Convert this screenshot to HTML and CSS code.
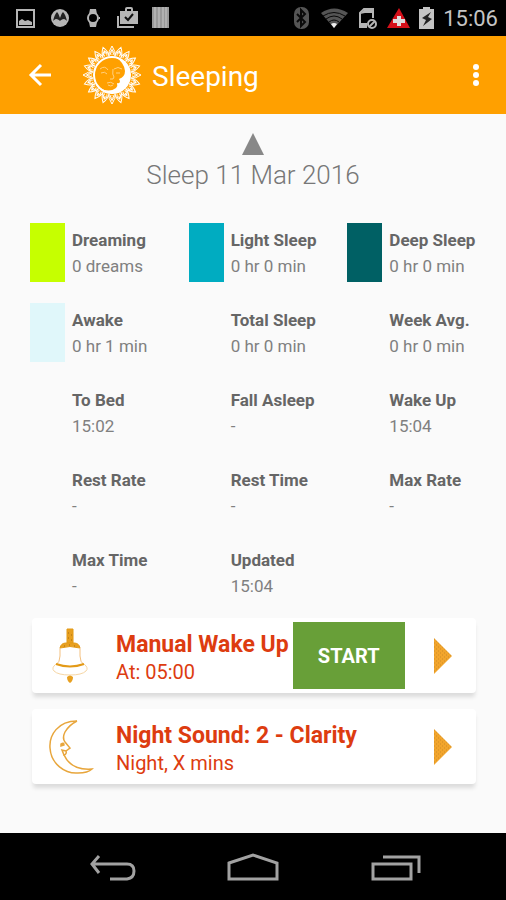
FILE: index.html
```html
<!DOCTYPE html>
<html lang="en">
  <head>
    <meta charset="UTF-8" />
    <meta name="viewport" content="width=device-width, initial-scale=1.0" />
    <title>Sleeping</title>
    <link rel="stylesheet" href="styles.css">
  </head>
  <body>
    <div class="status-bar">
      <div class="status-left">
        <svg width="24" height="24" viewBox="0 0 24 24" fill="none" stroke="#b5b5b5">
          <rect x="3" y="4" width="17" height="17" stroke-width="2" />
          <path d="M5 19v-4l3-2 3 2 3-1 4 2v3z" fill="#b5b5b5" stroke="none" />
        </svg>
        <svg width="24" height="24" viewBox="0 0 24 24">
          <circle cx="12" cy="12" r="9" fill="#b5b5b5" />
          <path d="M5 15c1-4 2-7 4-9 2 2 2 4 3 6 1-2 1-4 3-6 2 2 3 5 4 9-1-1-2-2-3-2-2 0-3 1-4 2-1-1-2-2-4-2-1 0-2 1-3 2z" fill="#222" />
        </svg>
        <svg width="24" height="24" viewBox="0 0 24 24" fill="#b5b5b5">
          <path d="M8 3h6l1 5H7zM7 16h8l-1 5H8z" />
          <circle cx="11" cy="12" r="5" fill="#000" stroke="#b5b5b5" stroke-width="2" />
          <path d="M17 11h1v2h-1z" />
        </svg>
        <svg width="24" height="24" viewBox="0 0 24 24" fill="#b5b5b5">
          <path d="M1 10h2v10h15v2H1z" />
          <path d="M4 5h5V3q0-2 2-2h4q2 0 2 2v2h5v13H4zM11 3v2h4V3z" fill-rule="evenodd" />
          <path d="M9 11l3 3 5-6" fill="none" stroke="#111" stroke-width="2" />
        </svg>
        <svg width="24" height="24" viewBox="0 0 24 24">
          <path d="M2 1h17v21H2z" fill="#999" />
          <path d="M5 1v21M9 1v21M13 1v21M16 1v21" stroke="#c8c8c8" />
        </svg>
      </div>
      <div class="status-right">
        <svg width="18" height="24" viewBox="0 0 18 24">
          <rect x="0" y="1" width="15" height="22" rx="7" fill="#555" />
          <path d="M3 8l8 8-4 4V4l4 4-8 8" fill="none" stroke="#0a0a0a" stroke-width="2" />
        </svg>
        <svg width="30" height="24" viewBox="0 0 30 24">
          <path d="M1 7Q14-2 28 7L14 22z" fill="#555" />
          <path d="M3 10q11-7 22 0M6 13q8-6 16 0M9 16q5-4 10 0" fill="none" stroke="#080808" />
          <path d="M11 18q3-2 6 0l-3 4z" fill="#eee" />
        </svg>
        <svg width="20" height="24" viewBox="0 0 20 24" fill="none" stroke="#b5b5b5" stroke-width="2">
          <path d="M8 21H2V7l4-4h9v9" />
          <path d="M1 17h8v5H1zM2 8l5-5h8v4H7z" fill="#b5b5b5" stroke="none" />
          <circle cx="14" cy="18" r="4" />
          <path d="M11 21l6-6" />
        </svg>
        <svg width="24" height="24" viewBox="0 0 24 24">
          <path d="M13 2l11 20H1z" fill="#d4101a" />
          <path d="M11 10h4v3h4v4h-4v3h-4v-3H7v-4h4z" fill="#ddd" />
        </svg>
        <svg width="17" height="24" viewBox="0 0 17 24">
          <path d="M5 1h7v2h4v20H1V3h4z" fill="#c4c4c4" />
          <path d="M13 6l-9 6 4 2-3 6 9-7-4-2z" fill="#222" />
        </svg>
        <span class="clock">15:06</span>
      </div>
    </div>

    <header class="app-bar">
      <button class="icon-btn" type="button" aria-label="Back">
        <svg width="24" height="24" viewBox="0 0 24 24" fill="none" stroke="#fff" stroke-width="3">
          <path d="M13 2L3 12l10 10M3 12h20" />
        </svg>
      </button>
      <svg class="logo" width="60" height="60" viewBox="-30 -30 60 60">
        <defs>
          <g id="ray" fill="none" stroke="#fff">
            <path d="M-3-19Q-4-23 0-29 4-23 3-19M0-26v4M-1-20Q-3-23 0-25 3-23 1-20" />
          </g>
          <g id="rays">
            <use href="#ray" />
            <use href="#ray" transform="rotate(18)" />
            <use href="#ray" transform="rotate(36)" />
            <use href="#ray" transform="rotate(54)" />
            <use href="#ray" transform="rotate(72)" />
          </g>
        </defs>
        <use href="#rays" />
        <use href="#rays" transform="rotate(90)" />
        <use href="#rays" transform="rotate(180)" />
        <use href="#rays" transform="rotate(270)" />
        <circle r="18" fill="#ffa000" stroke="#fff" stroke-width="2" />
        <path d="M3-18A18 18 0 1 1-12 13Q-3 18 4 13 6 11 5 8 8 9 8 6L7 4Q13 2 13-4 12-13 3-18z" fill="#fff" />
        <path d="M-12-6q5-4 8 1M-11-2q4-2 6 1M1-6q-1 6 1 8 0 3-4 2M2-6q4-3 8 0M4-2h4M-5 8q4-2 7 1M-4 10q3 2 5 0" fill="none" stroke="#ffd080" />
      </svg>
      <h1>Sleeping</h1>
      <button class="icon-btn menu" type="button" aria-label="More options">
        <svg width="8" height="24" viewBox="0 0 8 24" fill="#fff">
          <circle cx="4" cy="4" r="3" />
          <circle cx="4" cy="12" r="3" />
          <circle cx="4" cy="20" r="3" />
        </svg>
      </button>
    </header>

    <main>
      <div class="date">
        <button class="icon-btn" type="button" aria-label="Show chart">
          <svg width="22" height="22" viewBox="0 0 22 22" fill="#888">
            <path d="M11 0l11 22H0z" />
          </svg>
        </button>
        <h2>Sleep 11 Mar 2016</h2>
      </div>

      <dl class="stats">
        <div class="stat dreaming"><dt>Dreaming</dt><dd>0 dreams</dd></div>
        <div class="stat light"><dt>Light Sleep</dt><dd>0 hr 0 min</dd></div>
        <div class="stat deep"><dt>Deep Sleep</dt><dd>0 hr 0 min</dd></div>
        <div class="stat awake"><dt>Awake</dt><dd>0 hr 1 min</dd></div>
        <div class="stat"><dt>Total Sleep</dt><dd>0 hr 0 min</dd></div>
        <div class="stat"><dt>Week Avg.</dt><dd>0 hr 0 min</dd></div>
        <div class="stat"><dt>To Bed</dt><dd>15:02</dd></div>
        <div class="stat"><dt>Fall Asleep</dt><dd>-</dd></div>
        <div class="stat"><dt>Wake Up</dt><dd>15:04</dd></div>
        <div class="stat"><dt>Rest Rate</dt><dd>-</dd></div>
        <div class="stat"><dt>Rest Time</dt><dd>-</dd></div>
        <div class="stat"><dt>Max Rate</dt><dd>-</dd></div>
        <div class="stat"><dt>Max Time</dt><dd>-</dd></div>
        <div class="stat"><dt>Updated</dt><dd>15:04</dd></div>
      </dl>

      <section class="card">
        <svg class="card-icon" width="60" height="60" viewBox="0 0 60 60" fill="none" stroke="#f3c080">
          <path d="M26 3h6v14h-6z" fill="#e8a020" stroke="#e39a17" />
          <path d="M19 22q1-5 6-5h8q5 0 6 5-10-3-20 0z" fill="#e8a020" stroke="#e39a17" />
          <path d="M27 7h1M30 9h1M27 12h1M30 14h1M23 20h1M28 19h1M33 20h1" stroke="#a66d12" />
          <path d="M19 22v8q0 6-4 9M39 22v8q0 6 4 9" />
          <path d="M15 38q14 5 28 0" stroke="#e39a17" stroke-width="2" />
          <path d="M15 38q-5 4-2 7 4 4 16 4t16-4q3-3-2-7" stroke="#f6d6a4" />
          <path d="M26 51q3-3 6 0 0 4-3 6-3-2-3-6z" fill="#e8a020" stroke="none" />
        </svg>
        <div class="card-text">
          <h3>Manual Wake Up</h3>
          <p>At: 05:00</p>
        </div>
        <button class="start" type="button">START</button>
        <button class="icon-btn go" type="button" aria-label="Open wake up settings">
          <svg width="18" height="36" viewBox="0 0 18 36">
            <defs>
              <pattern id="grain" width="4" height="4" patternUnits="userSpaceOnUse">
                <path d="M0 0h4v4H0z" fill="#f2a52c" />
                <path d="M0 1h1M2 3h1" stroke="#cf8c26" />
              </pattern>
            </defs>
            <path d="M0 0l18 18L0 36z" fill="url(#grain)" />
          </svg>
        </button>
      </section>

      <section class="card">
        <svg class="card-icon" width="60" height="60" viewBox="0 0 60 60" fill="none" stroke="#e8a63c" stroke-width="1.5">
          <path d="M36 4C17 4 8 18 9 31c1 16 15 26 28 25 6 0 11-1 14-4-13 1-23-3-28-14" />
          <path d="M36 4q-8 4-12 11-3 6 0 10l5 6-4 3q1 3-2 4l-2-5 4 1" />
          <path d="M20 27q3-2 3 1l-3 1z" fill="#e8a63c" />
        </svg>
        <div class="card-text">
          <h3>Night Sound: 2 - Clarity</h3>
          <p>Night, X mins</p>
        </div>
        <button class="icon-btn go" type="button" aria-label="Open night sound settings">
          <svg width="18" height="36" viewBox="0 0 18 36">
            <path d="M0 0l18 18L0 36z" fill="url(#grain)" />
          </svg>
        </button>
      </section>
    </main>

    <nav class="nav-bar">
      <button class="icon-btn" type="button" aria-label="Back">
        <svg width="52" height="32" viewBox="0 0 52 32" fill="none" stroke="#a2a2a2" stroke-width="3">
          <path d="M14 4l-7 8 7 9M7 12h35q7 0 7 7t-7 8H25" />
        </svg>
      </button>
      <button class="icon-btn" type="button" aria-label="Home">
        <svg width="52" height="32" viewBox="0 0 52 32" fill="none" stroke="#a2a2a2" stroke-width="3">
          <path d="M2 11l24-8 24 8v16H2z" />
        </svg>
      </button>
      <button class="icon-btn" type="button" aria-label="Recent apps">
        <svg width="52" height="32" viewBox="0 0 52 32" fill="none" stroke="#a2a2a2" stroke-width="3">
          <path d="M4 12h38v15H4zM14 5h36v16" />
        </svg>
      </button>
    </nav>
  </body>
</html>
```

FILE: styles.css
```css
* {
  box-sizing: border-box;
}
body {
  margin: 0;
  min-height: 100vh;
  display: flex;
  flex-direction: column;
  font-family: Roboto, "Liberation Sans", sans-serif;
  background-color: #fafafa;
}
h1,
h2,
h3,
p,
dl,
dd {
  margin: 0;
}
svg {
  display: block;
  flex: none;
}
.icon-btn {
  padding: 0;
  border: 0;
  background: none;
  cursor: pointer;
}

/* status bar */
.status-bar {
  display: flex;
  justify-content: space-between;
  align-items: center;
  height: 36px;
  padding: 0 8px 0 14px;
  background-color: #000;
}
.status-left,
.status-right {
  display: flex;
  align-items: center;
}
.status-left {
  gap: 10px;
}
.status-right {
  gap: 8px;
}
.clock {
  color: #c4c4c4;
  font-size: 22px;
}

/* app bar */
.app-bar {
  display: flex;
  align-items: center;
  height: 78px;
  padding: 0 26px 0 28px;
  color: #fff;
  background-color: #ffa000;
}
.logo {
  margin: 0 10px 0 30px;
}
.app-bar h1 {
  padding-top: 2px;
  font-size: 28px;
  font-weight: 400;
}
.menu {
  margin-left: auto;
}

main {
  flex: 1;
}
.date {
  display: flex;
  flex-direction: column;
  align-items: center;
  padding-top: 19px;
  color: #777;
}
.date h2 {
  margin-top: 4px;
  font-size: 26px;
  font-weight: 300;
  line-height: 32px;
}

/* sleep stats */
.stats {
  display: grid;
  grid-template-columns: repeat(3, 1fr);
  row-gap: 21px;
  padding: 32px 0 0 30px;
}
.stat {
  height: 59px;
  padding-top: 4px;
  padding-left: 7px;
  border-left: 35px solid transparent;
  font-size: 17px;
  line-height: 26px;
}
.stat dt {
  color: #666;
  font-weight: 700;
}
.stat dd {
  color: #808080;
}
.dreaming {
  border-color: #c6ff00;
}
.light {
  border-color: #00acc1;
}
.deep {
  border-color: #006064;
}
.awake {
  border-color: #e0f7fa;
}

/* cards */
.card {
  display: flex;
  align-items: center;
  height: 75px;
  margin: 16px 30px 0 32px;
  padding-right: 24px;
  border-radius: 4px;
  background-color: #fff;
  box-shadow: 0 5px 4px -1px rgba(0, 0, 0, 0.12);
}
.card-icon {
  margin: 0 15px 0 9px;
}
.card-text {
  padding-top: 4px;
  color: #dd3c10;
  white-space: nowrap;
}
.card h3 {
  font-size: 23px;
  font-weight: 700;
  line-height: 28px;
}
.card p {
  font-size: 20px;
  line-height: 26px;
}
.start {
  width: 112px;
  height: 67px;
  margin-left: 4px;
  border: 0;
  color: #fff;
  background-color: #689f38;
  font-family: inherit;
  font-size: 20px;
  font-weight: 700;
}
.go {
  margin-left: auto;
}

.nav-bar {
  display: flex;
  justify-content: center;
  align-items: center;
  gap: 90px;
  height: 67px;
  padding-top: 2px;
  background-color: #000;
}
```
